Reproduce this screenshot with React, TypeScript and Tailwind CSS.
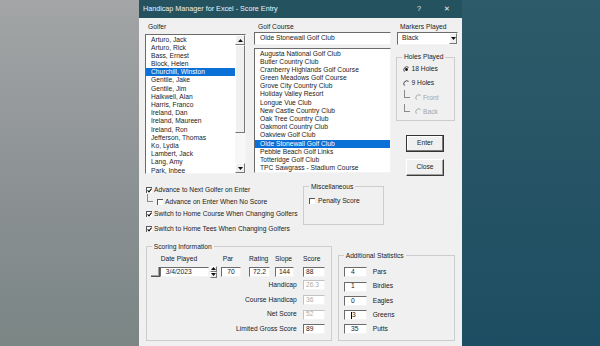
import React from 'react';

const golfers = [
  'Arturo, Jack', 'Arturo, Rick', 'Bass, Ernest', 'Block, Helen', 'Churchill, Winston',
  'Gentile, Jake', 'Gentile, Jim', 'Halkwell, Alan', 'Harris, Franco', 'Ireland, Dan',
  'Ireland, Maureen', 'Ireland, Ron', 'Jefferson, Thomas', 'Ko, Lydia', 'Lambert, Jack',
  'Lang, Amy', 'Park, Inbee',
];

const courses = [
  'Augusta National Golf Club', 'Butler Country Club', 'Cranberry Highlands Golf Course',
  'Green Meadows Golf Course', 'Grove City Country Club', 'Holiday Valley Resort',
  'Longue Vue Club', 'New Castle Country Club', 'Oak Tree Country Club', 'Oakmont Country Club',
  'Oakview Golf Club', 'Olde Stonewall Golf Club', 'Pebble Beach Golf Links',
  'Totteridge Golf Club', 'TPC Sawgrass - Stadium Course',
];

// classic userform edges
const sunken = 'bg-white border border-t-[#6b6b6b] border-l-[#6b6b6b] border-r-[#f4f4f4] border-b-[#f4f4f4]';
const sunkenOff = 'bg-white border border-t-[#c2c2c2] border-l-[#c2c2c2] border-r-[#f4f4f4] border-b-[#f4f4f4] text-[#ababab]';
const raised = 'bg-[#f0f0f0] border border-t-white border-l-white border-r-[#777] border-b-[#777]';

const Arrow = ({ up }: { up?: boolean }) => (
  <svg width="5" height="3" viewBox="0 0 5 3">
    <path d={up ? 'M0 3 L2.5 0 L5 3Z' : 'M0 0 L5 0 L2.5 3Z'} fill="#111" />
  </svg>
);

const Check = ({ checked }: { checked?: boolean }) => (
  <span className="relative block w-[6px] h-[6px] shrink-0 bg-white border-t border-l border-[#555]">
    {checked && (
      <svg className="absolute left-0 top-0" width="5" height="5" viewBox="0 0 5 5">
        <path d="M0.6 2.4 L2 3.9 L4.6 0.7" stroke="#111" strokeWidth="1.1" fill="none" />
      </svg>
    )}
  </span>
);

const Radio = ({ checked, disabled }: { checked?: boolean; disabled?: boolean }) => (
  <svg width="7" height="7" viewBox="0 0 7 7" className="block shrink-0">
    <path d="M5.6 1.4 A3 3 0 0 0 1.4 5.6" stroke={disabled ? '#a5a5a5' : '#444'} strokeWidth="1" fill="none" />
    {checked && <circle cx="3.5" cy="3.5" r="1.4" fill="#111" />}
  </svg>
);

const Group = ({ title, className, children }: { title: string; className: string; children?: React.ReactNode }) => (
  <fieldset className={`border border-[#cdcdcd] ${className}`}>
    <legend className="ml-[5px] px-[2px] leading-[8px]">{title}</legend>
    {children}
  </fieldset>
);

const Tree = () => <span className="self-start -mt-[4px] w-[6px] h-[8px] shrink-0 border-l border-b border-[#8a8a8a]" />;

const ScoreRow = ({ label, value, off }: { label: string; value: string; off?: boolean }) => (
  <div className="flex items-center justify-end h-[10px] pr-[5.7px]">
    <span className="mr-[6.3px]">{label}</span>
    <span className={`w-[22px] h-[10px] flex items-center pl-[2px] ${off ? sunkenOff : sunken}`}>{value}</span>
  </div>
);

const StatRow = ({ value, label, caret }: { value: string; label: string; caret?: boolean }) => (
  <div className="flex items-center ml-[5.3px] h-[10px]">
    <span className={`w-[22.7px] h-[10px] flex items-center pl-[6px] ${sunken}`}>
      {caret && <span className="w-px h-[7px] bg-black" />}
      {value}
    </span>
    <span className="ml-[6px]">{label}</span>
  </div>
);

export default function App() {
  return (
    <div className="w-[600px] h-[346px] flex overflow-hidden font-['Liberation_Sans',Arial,sans-serif] text-[6.7px] leading-[8.2px] text-[#1b1b1b]">
      <div className="w-[139px] h-full bg-linear-to-b from-[#a3a5a6] via-[#8d9294] to-[#7a8584]" />

      <div className="w-[323px] h-full bg-[#f0f0f0] flex flex-col">
        {/* title bar */}
        <div className="h-[18px] shrink-0 bg-[#25525f] flex items-center pl-[4px] text-[#eef3f4] text-[7.2px]">
          <span>Handicap Manager for Excel - Score Entry</span>
          <span className="ml-auto w-[10px] text-center">?</span>
          <span className="ml-[18px] mr-[10px] w-[10px] text-center">✕</span>
        </div>

        {/* lists */}
        <div className="h-[160px] shrink-0 flex pl-[6px]">
          <div className="w-[101px] flex flex-col">
            <div className="h-[16px] pt-[5px] pl-[3px] leading-[8px]">Golfer</div>
            <div className={`h-[140px] flex ${sunken}`}>
              <div className="flex-1 flex flex-col pt-[0.5px]">
                {golfers.map((g, i) => (
                  <div key={g} className={`h-[8.2px] pl-[5px] whitespace-nowrap ${i === 4 ? 'bg-[#0a6fd6] text-white' : ''}`}>{g}</div>
                ))}
              </div>
              <div className="w-[10px] flex flex-col bg-[#f7f7f7]">
                <div className={`h-[10px] flex items-center justify-center ${raised}`}><Arrow up /></div>
                <div className={`h-[88px] ${raised}`} />
                <div className="flex-1" />
                <div className={`h-[10px] flex items-center justify-center ${raised}`}><Arrow /></div>
              </div>
            </div>
          </div>

          <div className="ml-[8px] w-[137px] flex flex-col">
            <div className="h-[14px] pt-[5px] pl-[4px] leading-[8px]">Golf Course</div>
            <div className={`h-[13px] pl-[5px] flex items-center whitespace-nowrap ${sunken}`}>Olde Stonewall Golf Club</div>
            <div className={`mt-[3px] h-[125px] flex flex-col pt-[0.5px] ${sunken}`}>
              {courses.map((c, i) => (
                <div key={c} className={`h-[8.2px] pl-[5px] whitespace-nowrap ${i === 11 ? 'bg-[#0a6fd6] text-white' : ''}`}>{c}</div>
              ))}
            </div>
          </div>

          <div className="ml-[6px] w-[61px] flex flex-col">
            <div className="h-[14px] pt-[5px] pl-[3px] leading-[8px] whitespace-nowrap">Markers Played</div>
            <div className={`h-[13px] flex ${sunken}`}>
              <span className="flex-1 pl-[4px] flex items-center">Black</span>
              <span className={`w-[8px] flex items-center justify-center ${raised}`}><Arrow /></span>
            </div>
            <Group title="Holes Played" className="-ml-[1px] mt-[8px] w-[59px] h-[68px]">
              <div className="flex items-center h-[8px] mt-[4px] pl-[6px]">
                <Radio checked /><span className="ml-[1.5px]">18 Holes</span>
              </div>
              <div className="flex items-center h-[8px] mt-[6px] pl-[6px]">
                <Radio /><span className="ml-[1.5px]">9 Holes</span>
              </div>
              <div className="flex items-center h-[8px] mt-[6.7px] pl-[7px] text-[#a5a5a5]">
                <Tree /><span className="ml-[5px]"><Radio disabled /></span><span className="ml-[1px]">Front</span>
              </div>
              <div className="flex items-center h-[8px] mt-[6px] pl-[7px] text-[#a5a5a5]">
                <Tree /><span className="ml-[5px]"><Radio disabled /></span><span className="ml-[1px]">Back</span>
              </div>
            </Group>
            <button className="mt-[13.6px] ml-[9px] w-[38px] h-[17px] bg-[#f0f0f0] border border-[#333] shadow-[inset_-1px_-1px_0_#7a7a7a,inset_1px_1px_0_#fff]">Enter</button>
            <button className="mt-[7px] ml-[9px] w-[38px] h-[17px] bg-[#f0f0f0] border border-t-white border-l-white border-r-[#3a3a3a] border-b-[#3a3a3a] shadow-[inset_-1px_-1px_0_#a0a0a0]">Close</button>
          </div>
        </div>

        {/* options */}
        <div className="h-[64.7px] shrink-0 flex pl-[6px]">
          <div className="w-[158px] flex flex-col">
            <div className="mt-[8px] h-[8px] flex items-center">
              <span className="ml-[1px]"><Check checked /></span><span className="ml-[2px] whitespace-nowrap">Advance to Next Golfer on Enter</span>
            </div>
            <div className="mt-[4.3px] h-[8px] flex items-center">
              <span className="ml-[2px] flex self-stretch"><Tree /></span>
              <span className="ml-[4px]"><Check /></span><span className="ml-[2px] whitespace-nowrap">Advance on Enter When No Score</span>
            </div>
            <div className="mt-[4px] h-[8px] flex items-center">
              <span className="ml-[1px]"><Check checked /></span><span className="ml-[2px] whitespace-nowrap">Switch to Home Course When Changing Golfers</span>
            </div>
            <div className="mt-[7px] h-[8px] flex items-center">
              <span className="ml-[1px]"><Check checked /></span><span className="ml-[2px] whitespace-nowrap">Switch to Home Tees When Changing Golfers</span>
            </div>
          </div>
          <Group title="Miscellaneous" className="mt-[4.7px] w-[81px] h-[42.3px]">
            <div className="mt-[6.3px] h-[8px] pl-[5px] flex items-center">
              <Check /><span className="ml-[3px]">Penalty Score</span>
            </div>
          </Group>
        </div>

        {/* scoring */}
        <div className="flex items-start pl-[6.7px]">
          <Group title="Scoring Information" className="w-[186px] h-[98.3px]">
            <div className="flex mt-[4.6px]">
              <div className="ml-[4px] w-[67px] flex flex-col">
                <div className="h-[8px] pl-[10px] leading-[8px]">Date Played</div>
                <div className="mt-[3.4px] h-[10px] flex">
                  <span className="w-[9px] h-[10px] border-r border-b border-[#555] shadow-[inset_-1px_-1px_0_#a0a0a0]" />
                  <span className={`w-[49px] h-[10px] flex items-center pl-[5px] ${sunken}`}>3/4/2023</span>
                  <span className="ml-[1.3px] -mt-[1px] w-[7px] h-[12px] flex flex-col">
                    <span className={`flex-1 flex items-center justify-center ${raised}`}><Arrow up /></span>
                    <span className={`flex-1 flex items-center justify-center ${raised}`}><Arrow /></span>
                  </span>
                </div>
              </div>
              <div className="ml-[3.3px] w-[20px] flex flex-col">
                <div className="h-[8px] pl-[1.7px] leading-[8px]">Par</div>
                <div className={`mt-[3.4px] h-[10px] flex items-center justify-center ${sunken}`}>70</div>
              </div>
              <div className="ml-[8px] w-[21px] flex flex-col">
                <div className="h-[8px] leading-[8px]">Rating</div>
                <div className={`mt-[3.4px] h-[10px] flex items-center justify-center ${sunken}`}>72.2</div>
              </div>
              <div className="ml-[5px] w-[19px] flex flex-col">
                <div className="h-[8px] leading-[8px]">Slope</div>
                <div className={`mt-[3.4px] h-[10px] flex items-center justify-center ${sunken}`}>144</div>
              </div>
              <div className="ml-[9px] w-[22px] flex flex-col">
                <div className="h-[8px] leading-[8px]">Score</div>
                <div className={`mt-[3.4px] h-[10px] flex items-center pl-[2px] ${sunken}`}>88</div>
              </div>
            </div>
            <div className="mt-[3.5px] flex flex-col gap-[4.7px]">
              <ScoreRow label="Handicap" value="26.3" off />
              <ScoreRow label="Course Handicap" value="36" off />
              <ScoreRow label="Net Score" value="52" off />
              <ScoreRow label="Limited Gross Score" value="89" />
            </div>
          </Group>

          <Group title="Additional Statistics" className="ml-[6px] mt-[9px] w-[117.6px] h-[89.3px]">
            <div className="mt-[7.6px] flex flex-col gap-[4.25px]">
              <StatRow value="4" label="Pars" />
              <StatRow value="1" label="Birdies" />
              <StatRow value="0" label="Eagles" />
              <StatRow value="3" label="Greens" caret />
              <StatRow value="35" label="Putts" />
            </div>
          </Group>
        </div>
      </div>

      <div className="flex-1 h-full bg-linear-to-b from-[#2e5b69] to-[#1d4d62]" />
    </div>
  );
}
